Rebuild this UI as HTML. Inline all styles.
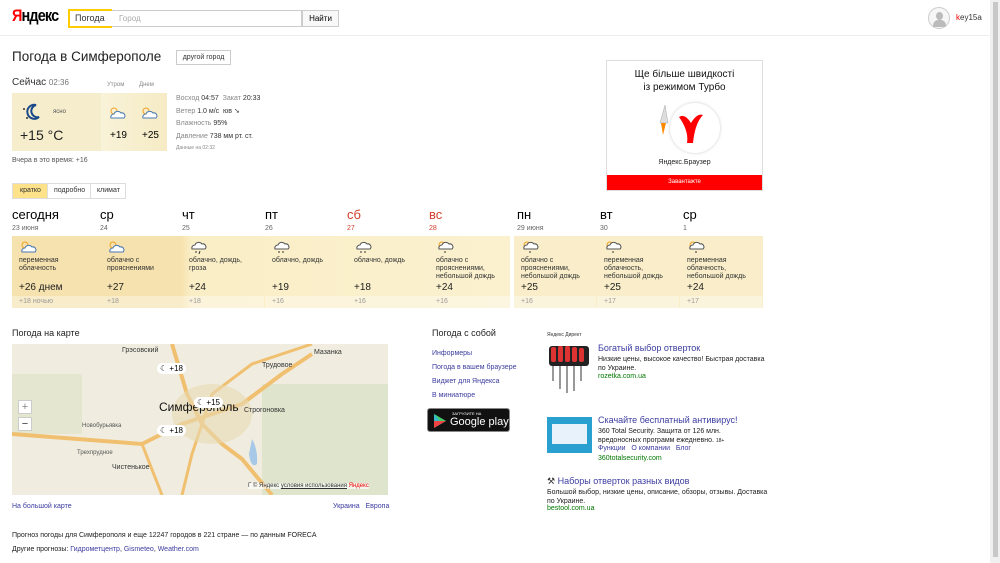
<!DOCTYPE html>
<html><head><meta charset="utf-8"><style>
*{box-sizing:border-box;margin:0;padding:0}
body{width:1000px;height:563px;overflow:hidden;background:#fff;font-family:"Liberation Sans","Noto Sans CJK SC",sans-serif;color:#000;position:relative;font-size:8px}
.a{position:absolute;white-space:nowrap}
a,.lk{color:#3c3ca0;text-decoration:none}
.g{color:#888}
.day{position:absolute;top:207px;width:82px}
.day .n{font-size:13px;}
.day .d{font-size:7px;color:#666;margin-top:3px}
.red .n,.red .d{color:#d0402c}
.cell{position:absolute;top:236px;width:82px;height:72px;padding:4px 0 0 7px;font-size:7px;color:#333;line-height:8px}
.cell svg{display:block;margin-bottom:3px}
.cell .t{position:absolute;top:48px;left:7px;font-size:10px;color:#222}
.cell .ni{position:absolute;top:60px;left:0;width:100%;height:12px;padding:2px 7px;color:#999;background:rgba(255,255,255,.35)}
</style></head><body>
<div class="a" style="left:12px;top:6px;font-size:17px;font-weight:bold;letter-spacing:-1px;transform:scaleX(.85);transform-origin:left"><span style="color:#f00">Я</span>ндекс</div>
<div class="a" style="left:68px;top:10px;width:234px;height:17px;border:1px solid #ccc;"></div>
<div class="a" style="left:68px;top:9px;width:44px;height:19px;border:2px solid #fc0;border-right:none;background:#fff;font-size:9px;padding:2px 5px;color:#333">Погода</div>
<div class="a" style="left:119px;top:14px;font-size:8px;color:#aaa">Город</div>
<div class="a" style="left:302px;top:10px;width:37px;height:17px;border:1px solid #ccc;font-size:8px;text-align:center;padding-top:3px;background:#f8f8f8">Найти</div>
<div class="a" style="left:0;top:35px;width:990px;height:1px;background:#eee"></div>
<div class="a" style="left:928px;top:7px;width:22px;height:22px;border:1px solid #ccc;border-radius:50%;background:#f6f6f6"><div style="position:absolute;left:7px;top:4px;width:7px;height:8px;border-radius:50%;background:#bbb"></div><div style="position:absolute;left:4px;top:12px;width:13px;height:7px;border-radius:6px 6px 2px 2px;background:#bbb"></div></div>
<div class="a" style="left:956px;top:13px;font-size:8px;color:#333"><span style="color:#e00">k</span>ey15a</div>
<div class="a" style="left:990px;top:0;width:10px;height:563px;background:#f0f0f0"><div style="margin:2px auto;width:5px;height:555px;background:#c8c8c8"></div></div>

<div class="a" style="left:12px;top:49px;font-size:13.5px;color:#222">Погода в Симферополе</div>
<div class="a" style="left:176px;top:50px;width:55px;height:15px;border:1px solid #ccc;font-size:7px;text-align:center;padding-top:3px;color:#333">другой город</div>

<div class="a" style="left:12px;top:77px;font-size:10px;color:#333">Сейчас <span style="font-size:8px;color:#777">02:36</span></div>
<div class="a g" style="left:107px;top:82px;font-size:6px">Утром</div>
<div class="a g" style="left:139px;top:82px;font-size:6px">Днем</div>
<div class="a" style="left:12px;top:93px;width:89px;height:58px;background:#f6edcd"></div>
<div class="a" style="left:101px;top:93px;width:66px;height:58px;background:linear-gradient(90deg,#f8f2d8,#f6ebc5)"></div>
<svg class="a" style="left:20px;top:102px" width="24" height="20"><path d="M16 3a7 7 0 1 0 3 12a6 6 0 0 1-3-12z" fill="none" stroke="#1a4a8a" stroke-width="2"/><circle cx="4" cy="7" r="1" fill="#333"/><circle cx="7" cy="16" r="1" fill="#333"/></svg>
<div class="a" style="left:53px;top:109px;font-size:6px;color:#555">ясно</div>
<div class="a" style="left:20px;top:127px;font-size:14px;color:#222">+15 °C</div>
<svg class="a" style="left:108px;top:106px" width="18" height="14"><circle cx="6" cy="5" r="3" fill="none" stroke="#f0a020"/><path d="M3 12a3 3 0 0 1 3-4a4 4 0 0 1 7-1a3 3 0 0 1 3 5z" fill="#fff" stroke="#4a7ab0"/></svg>
<svg class="a" style="left:140px;top:106px" width="18" height="14"><circle cx="6" cy="5" r="3" fill="none" stroke="#f0a020"/><path d="M3 12a3 3 0 0 1 3-4a4 4 0 0 1 7-1a3 3 0 0 1 3 5z" fill="#fff" stroke="#4a7ab0"/></svg>
<div class="a" style="left:110px;top:130px;font-size:10px">+19</div>
<div class="a" style="left:142px;top:130px;font-size:10px">+25</div>
<div class="a g" style="left:176px;top:93px;font-size:7px;line-height:12.5px">Восход <span style="color:#333">04:57</span> &nbsp;Закат <span style="color:#333">20:33</span><br>Ветер <span style="color:#333">1.0 м/с &nbsp;юв ➘</span><br>Влажность <span style="color:#333">95%</span><br>Давление <span style="color:#333">738 мм рт. ст.</span></div>
<div class="a g" style="left:176px;top:145px;font-size:5px">Данные на 02:32</div>
<div class="a" style="left:12px;top:157px;font-size:7px;color:#555">Вчера в это время: +16</div>

<div class="a" style="left:12px;top:183px;width:114px;height:16px;border:1px solid #ddd;font-size:7px;color:#333">
<span style="position:absolute;left:0;top:0;width:34px;height:14px;background:#fde28a;padding:3px 0 0 7px">кратко</span>
<span style="position:absolute;left:34px;top:0;width:43px;height:14px;border-left:1px solid #ddd;padding:3px 0 0 6px">подробно</span>
<span style="position:absolute;left:77px;top:0;width:36px;height:14px;border-left:1px solid #ddd;padding:3px 0 0 6px">климат</span></div>

<div class="day" style="left:12px"><div class="n">сегодня</div><div class="d">23 июня</div></div>
<div class="day" style="left:100px"><div class="n">ср</div><div class="d">24</div></div>
<div class="day" style="left:182px"><div class="n">чт</div><div class="d">25</div></div>
<div class="day" style="left:265px"><div class="n">пт</div><div class="d">26</div></div>
<div class="day red" style="left:347px"><div class="n">сб</div><div class="d">27</div></div>
<div class="day red" style="left:429px"><div class="n">вс</div><div class="d">28</div></div>
<div class="day" style="left:517px"><div class="n">пн</div><div class="d">29 июня</div></div>
<div class="day" style="left:600px"><div class="n">вт</div><div class="d">30</div></div>
<div class="day" style="left:683px"><div class="n">ср</div><div class="d">1</div></div>

<div class="a" style="left:12px;top:236px;width:498px;height:72px;background:linear-gradient(90deg,#f6e2ae 0,#f6e2ae 34%,#faeec6 36%,#fbf1cf 100%)"></div>
<div class="a" style="left:514px;top:236px;width:249px;height:72px;background:#f9eec9"></div>

<div class="cell" style="left:12px;width:88px"><svg width="20" height="14"><circle cx="6" cy="5" r="3" fill="none" stroke="#f0a020"/><path d="M3 12a3 3 0 0 1 3-4a4 4 0 0 1 7-1a3 3 0 0 1 3 5z" fill="#fff" stroke="#4a7ab0"/></svg>переменная<br>облачность<div class="t">+26 днем</div><div class="ni">+18 ночью</div></div>
<div class="cell" style="left:100px;width:82px"><svg width="20" height="14"><circle cx="6" cy="5" r="3" fill="none" stroke="#f0a020"/><path d="M3 12a3 3 0 0 1 3-4a4 4 0 0 1 7-1a3 3 0 0 1 3 5z" fill="#fff" stroke="#4a7ab0"/></svg>облачно с<br>прояснениями<div class="t">+27</div><div class="ni">+18</div></div>
<div class="cell" style="left:182px"><svg width="20" height="14"><path d="M3 9a3 3 0 0 1 3-4a4 4 0 0 1 7-1a3 3 0 0 1 3 5z" fill="#fff" stroke="#555"/><path d="M7 11v2M11 11l-1 3" stroke="#333"/></svg>облачно, дождь,<br>гроза<div class="t">+24</div><div class="ni">+18</div></div>
<div class="cell" style="left:265px"><svg width="20" height="14"><path d="M3 9a3 3 0 0 1 3-4a4 4 0 0 1 7-1a3 3 0 0 1 3 5z" fill="#fff" stroke="#555"/><path d="M7 11v2M11 11v2" stroke="#333"/></svg>облачно, дождь<div class="t">+19</div><div class="ni">+16</div></div>
<div class="cell" style="left:347px"><svg width="20" height="14"><path d="M3 9a3 3 0 0 1 3-4a4 4 0 0 1 7-1a3 3 0 0 1 3 5z" fill="#fff" stroke="#555"/><path d="M7 11v2M11 11v2" stroke="#333"/></svg>облачно, дождь<div class="t">+18</div><div class="ni">+16</div></div>
<div class="cell" style="left:429px"><svg width="20" height="14"><circle cx="6" cy="5" r="3" fill="none" stroke="#f0a020"/><path d="M3 9a3 3 0 0 1 3-4a4 4 0 0 1 7-1a3 3 0 0 1 3 5z" fill="#fff" stroke="#555"/><path d="M9 11v2" stroke="#333"/></svg>облачно с<br>прояснениями,<br>небольшой дождь<div class="t">+24</div><div class="ni">+16</div></div>
<div class="cell" style="left:514px"><svg width="20" height="14"><circle cx="6" cy="5" r="3" fill="none" stroke="#f0a020"/><path d="M3 9a3 3 0 0 1 3-4a4 4 0 0 1 7-1a3 3 0 0 1 3 5z" fill="#fff" stroke="#555"/><path d="M9 11v2" stroke="#333"/></svg>облачно с<br>прояснениями,<br>небольшой дождь<div class="t">+25</div><div class="ni">+16</div></div>
<div class="cell" style="left:597px"><svg width="20" height="14"><circle cx="6" cy="5" r="3" fill="none" stroke="#f0a020"/><path d="M3 9a3 3 0 0 1 3-4a4 4 0 0 1 7-1a3 3 0 0 1 3 5z" fill="#fff" stroke="#555"/><path d="M9 11v2" stroke="#333"/></svg>переменная<br>облачность,<br>небольшой дождь<div class="t">+25</div><div class="ni">+17</div></div>
<div class="cell" style="left:680px"><svg width="20" height="14"><circle cx="6" cy="5" r="3" fill="none" stroke="#f0a020"/><path d="M3 9a3 3 0 0 1 3-4a4 4 0 0 1 7-1a3 3 0 0 1 3 5z" fill="#fff" stroke="#555"/><path d="M9 11v2" stroke="#333"/></svg>переменная<br>облачность,<br>небольшой дождь<div class="t">+24</div><div class="ni">+17</div></div>

<div class="a" style="left:606px;top:60px;width:157px;height:131px;border:1px solid #ddd;background:#fff">
<div style="text-align:center;font-size:10px;line-height:13px;margin-top:7px;color:#111">Ще більше швидкості<br>із режимом Турбо</div>
<div style="position:absolute;left:63px;top:42px;width:50px;height:50px;border-radius:50%;background:#fff;box-shadow:0 0 3px #ccc"></div>
<svg style="position:absolute;left:68px;top:46px" width="40" height="40"><path d="M4 10q6-4 12 6q6-10 12-8q-8 8-10 28h-6q2-12-8-26z" fill="#f00"/></svg>
<svg style="position:absolute;left:44px;top:42px" width="20" height="38"><path d="M14 2l3 18h-8z" fill="#ddd" stroke="#aaa" stroke-width=".5"/><path d="M10 20l2 12l3-12z" fill="#f80"/></svg>
<div style="position:absolute;top:98px;width:100%;text-align:center;font-size:7px;color:#222">Яндекс.Браузер</div>
<div style="position:absolute;left:0;bottom:0;width:100%;height:15px;background:#f00;color:#fff;font-size:6px;text-align:center;padding-top:4px">Завантажте</div></div>

<div class="a" style="left:12px;top:328px;font-size:9px;color:#222">Погода на карте</div>
<div class="a" style="left:12px;top:344px;width:376px;height:151px;background:#f0ede0;overflow:hidden">
<svg width="376" height="151" style="position:absolute;left:0;top:0">
<rect x="250" y="40" width="126" height="111" fill="#dfe5cc"/><rect x="0" y="30" width="70" height="60" fill="#e4e6cf"/>
<path d="M240 95 q6 10 5 25 q-6 5-8-10z" fill="#a8c8e8"/>
<path d="M0 90 L130 100 L170 80 L200 70 L230 60 L270 30 L300 10" fill="none" stroke="#f0c070" stroke-width="4"/>
<path d="M160 0 L175 50 L190 80 L210 100 L230 115 L260 151" fill="none" stroke="#f0c070" stroke-width="4"/>
<path d="M170 151 L180 110 L190 80 L200 50 L240 20 L300 0" fill="none" stroke="#f0c070" stroke-width="3"/>
<path d="M130 100 L150 151" fill="none" stroke="#f0c070" stroke-width="3"/>
<ellipse cx="200" cy="70" rx="40" ry="30" fill="#e8d8b0" opacity=".6"/>
</svg>
<div class="a" style="left:110px;top:3px;font-size:7px;color:#333">Грэсовский</div>
<div class="a" style="left:302px;top:5px;font-size:7px;color:#333">Мазанка</div>
<div class="a" style="left:250px;top:18px;font-size:7px;color:#333">Трудовое</div>
<div class="a" style="left:232px;top:63px;font-size:7px;color:#333">Строгоновка</div>
<div class="a" style="left:100px;top:120px;font-size:7px;color:#333">Чистенькое</div>
<div class="a" style="left:70px;top:79px;font-size:6px;color:#555">Новобурьявка</div>
<div class="a" style="left:65px;top:106px;font-size:6px;color:#555">Трехпрудное</div>
<div class="a" style="left:147px;top:56px;font-size:12px;color:#111">Симферополь</div>
<div class="a" style="left:145px;top:19px;background:#fff;border-radius:7px;padding:1px 3px;font-size:8px">☾ +18</div>
<div class="a" style="left:182px;top:53px;background:#fff;border-radius:7px;padding:1px 3px;font-size:8px">☾ +15</div>
<div class="a" style="left:145px;top:81px;background:#fff;border-radius:7px;padding:1px 3px;font-size:8px">☾ +18</div>
<div class="a" style="left:6px;top:56px;width:14px;height:14px;background:#fff;border:1px solid #ccc;text-align:center;font-size:11px;line-height:12px;color:#888">+</div>
<div class="a" style="left:6px;top:73px;width:14px;height:14px;background:#fff;border:1px solid #ccc;text-align:center;font-size:11px;line-height:12px;color:#333">−</div>
<div class="a" style="left:236px;top:139px;font-size:6px;color:#333;background:rgba(255,255,255,.6)">Г © Яндекс <u>условия использования</u> <span style="color:#e00">Яндекс</span></div>
</div>
<div class="a lk" style="left:12px;top:503px;font-size:7px">На большой карте</div>
<div class="a lk" style="left:333px;top:503px;font-size:7px">Украина &nbsp; Европа</div>
<div class="a" style="left:12px;top:532px;font-size:7px;color:#222">Прогноз погоды для Симферополя и еще 12247 городов в 221 стране — по данным FORECA</div>
<div class="a" style="left:12px;top:546px;font-size:7px;color:#222">Другие прогнозы: <span class="lk">Гидрометцентр</span>, <span class="lk">Gismeteo</span>, <span class="lk">Weather.com</span></div>

<div class="a" style="left:432px;top:328px;font-size:9px;color:#222">Погода с собой</div>
<div class="a lk" style="left:432px;top:347px;font-size:7px;line-height:14px">Информеры<br>Погода в вашем браузере<br>Виджет для Яндекса<br>В миниатюре</div>
<div class="a" style="left:427px;top:408px;width:83px;height:24px;background:#111;border-radius:3px;border:1px solid #888">
<svg style="position:absolute;left:5px;top:4px" width="14" height="16"><path d="M1 1l12 7l-12 7z" fill="#3bc"/><path d="M1 8h12l-12 7z" fill="#e44"/><path d="M1 1l6 7l6 0z" fill="#4c6"/></svg>
<div style="position:absolute;left:24px;top:2px;font-size:4px;color:#fff">ЗАГРУЗИТЕ НА</div>
<div style="position:absolute;left:22px;top:7px;font-size:11px;color:#fff">Google play</div></div>

<div class="a" style="left:547px;top:332px;font-size:5px;color:#333">Яндекс Директ</div>
<svg class="a" style="left:547px;top:344px" width="46" height="60"><g fill="#222"><rect x="2" y="2" width="40" height="20" rx="3"/></g><g fill="#d33"><rect x="4" y="3" width="5" height="15" rx="2"/><rect x="11" y="2" width="5" height="16" rx="2"/><rect x="18" y="2" width="5" height="16" rx="2"/><rect x="25" y="3" width="5" height="15" rx="2"/><rect x="32" y="4" width="5" height="14" rx="2"/></g><g stroke="#333"><path d="M6 22v15M13 22v23M20 22v27M27 22v25M34 22v15"/></g></svg>
<div class="a lk" style="left:598px;top:343px;font-size:9px">Богатый выбор отверток</div>
<div class="a" style="left:598px;top:355px;font-size:7px;color:#222;line-height:9px;white-space:normal;width:172px">Низкие цены, высокое качество! Быстрая доставка по Украине.</div>
<div class="a" style="left:598px;top:373px;font-size:7px;color:#070">rozetka.com.ua</div>
<div class="a" style="left:547px;top:417px;width:45px;height:36px;background:#2aa0d0"><div style="margin:7px 5px;height:20px;background:#e8f2fa"></div></div>
<div class="a lk" style="left:598px;top:415px;font-size:9px">Скачайте бесплатный антивирус!</div>
<div class="a" style="left:598px;top:427px;font-size:7px;color:#222;line-height:9px">360 Total Security. Защита от 126 млн.<br>вредоносных программ ежедневно. <span style="font-size:5px">18+</span></div>
<div class="a lk" style="left:598px;top:445px;font-size:7px">Функции &nbsp;&nbsp;О компании &nbsp;&nbsp;Блог</div>
<div class="a" style="left:598px;top:455px;font-size:7px;color:#070">360totalsecurity.com</div>
<div class="a lk" style="left:547px;top:476px;font-size:9px"><span style="color:#333">⚒</span> Наборы отверток разных видов</div>
<div class="a" style="left:547px;top:488px;font-size:7px;color:#222;line-height:9px">Большой выбор, низкие цены, описание, обзоры, отзывы. Доставка<br>по Украине.</div>
<div class="a" style="left:547px;top:505px;font-size:7px;color:#070">bestool.com.ua</div>
</body></html>
